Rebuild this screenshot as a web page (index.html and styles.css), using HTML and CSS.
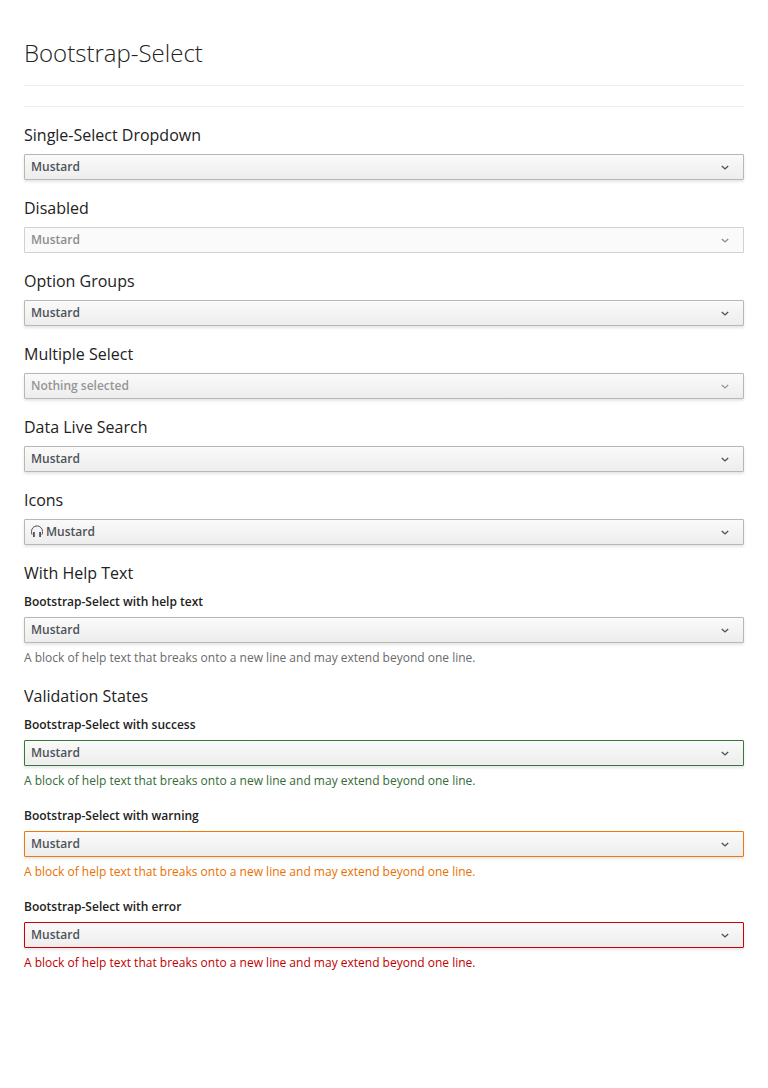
FILE: index.html
```html
<!DOCTYPE html>
<html lang="en">
<head>
<meta charset="utf-8">
<title>Bootstrap-Select</title>
<link rel="stylesheet" href="styles.css">
</head>
<body>
<svg class="sprite" aria-hidden="true">
  <symbol id="angle" viewBox="0 0 8 5"><path d="M.8 1 4 3.900 7.200 1" fill="none" stroke="currentColor" stroke-width="1.4"/></symbol>
</svg>
<main class="container">
  <h1 class="page-title">Bootstrap-Select</h1>
  <hr class="rule">

  <h2 class="heading">Single-Select Dropdown</h2>
  <button class="select"><span>Mustard</span><svg class="caret"><use href="#angle"/></svg></button>

  <h2 class="heading">Disabled</h2>
  <button class="select select-disabled" disabled><span>Mustard</span><svg class="caret"><use href="#angle"/></svg></button>

  <h2 class="heading">Option Groups</h2>
  <button class="select"><span>Mustard</span><svg class="caret"><use href="#angle"/></svg></button>

  <h2 class="heading">Multiple Select</h2>
  <button class="select select-placeholder"><span>Nothing selected</span><svg class="caret"><use href="#angle"/></svg></button>

  <h2 class="heading">Data Live Search</h2>
  <button class="select"><span>Mustard</span><svg class="caret"><use href="#angle"/></svg></button>

  <h2 class="heading">Icons</h2>
  <button class="select"><svg class="headphones" viewBox="0 0 12 12"><path d="M1 9.700C.6 8.600.5 7.500.5 6.400a5.500 5.500 0 0 1 11 0c0 1.100-.1 2.200-.5 3.300" fill="none" stroke="currentColor"/><path d="M2 7h1.800v5H2zM8.200 7H10v5H8.200z" fill="currentColor"/></svg><span>Mustard</span><svg class="caret"><use href="#angle"/></svg></button>

  <h2 class="heading">With Help Text</h2>
  <div class="form-group">
    <label class="label">Bootstrap-Select with help text</label>
    <button class="select"><span>Mustard</span><svg class="caret"><use href="#angle"/></svg></button>
    <p class="help">A block of help text that breaks onto a new line and may extend beyond one line.</p>
  </div>

  <h2 class="heading">Validation States</h2>
  <div class="form-group has-success">
    <label class="label">Bootstrap-Select with success</label>
    <button class="select"><span>Mustard</span><svg class="caret"><use href="#angle"/></svg></button>
    <p class="help">A block of help text that breaks onto a new line and may extend beyond one line.</p>
  </div>
  <div class="form-group has-warning">
    <label class="label">Bootstrap-Select with warning</label>
    <button class="select"><span>Mustard</span><svg class="caret"><use href="#angle"/></svg></button>
    <p class="help">A block of help text that breaks onto a new line and may extend beyond one line.</p>
  </div>
  <div class="form-group has-error">
    <label class="label">Bootstrap-Select with error</label>
    <button class="select"><span>Mustard</span><svg class="caret"><use href="#angle"/></svg></button>
    <p class="help">A block of help text that breaks onto a new line and may extend beyond one line.</p>
  </div>
</main>
</body>
</html>
```
FILE: styles.css
```css
* { box-sizing: border-box; }
body {
  margin: 0;
  background: #fff;
  color: #222;
  font: 12px/20px "Open Sans", "Noto Sans", sans-serif;
}
.sprite { display: none; }
.container { padding: 38px 24px 0; }
.page-title {
  margin: 0;
  height: 48px;
  border-bottom: 1px solid #eee;
  font-size: 24px;
  font-weight: 300;
  line-height: 30px;
}
.rule {
  margin: 20px 0 0;
  border: 0;
  border-top: 1px solid #eee;
}
.heading {
  margin: 18px 0 9px;
  font-size: 16px;
  font-weight: 400;
  line-height: 20px;
}
.select {
  display: flex;
  align-items: center;
  width: 100%;
  height: 26px;
  padding: 0 14px 0 6px;
  border: 1px solid #b7b7b7;
  border-radius: 1px;
  background: linear-gradient(#fafafa, #ededed);
  box-shadow: 0 2px 3px rgba(3, 3, 3, .1);
  color: #4d5258;
  font: 600 12px/20px "Open Sans", "Noto Sans", sans-serif;
}
.caret {
  width: 8px;
  height: 5px;
  margin-top: 1px;
  margin-left: auto;
}
.headphones {
  width: 12px;
  height: 12px;
  margin-right: 3px;
  margin-bottom: 2px;
}
.select-disabled {
  border-color: #d1d1d1;
  background: #fafafa;
  box-shadow: none;
  color: #8b8d8f;
}
.select-placeholder { color: #969696; }
.form-group + .form-group { margin-top: 15px; }
.label {
  display: block;
  margin-bottom: 5px;
  font-weight: 600;
}
.help {
  margin: 5px 0 0;
  color: #6a6a6a;
}
.has-success .select { border-color: #3c763d; }
.has-success .help { color: #346b35; }
.has-warning .select { border-color: #ec7a08; }
.has-warning .help { color: #ea7000; }
.has-error .select { border-color: #c00; }
.has-error .help { color: #c00000; }
```
